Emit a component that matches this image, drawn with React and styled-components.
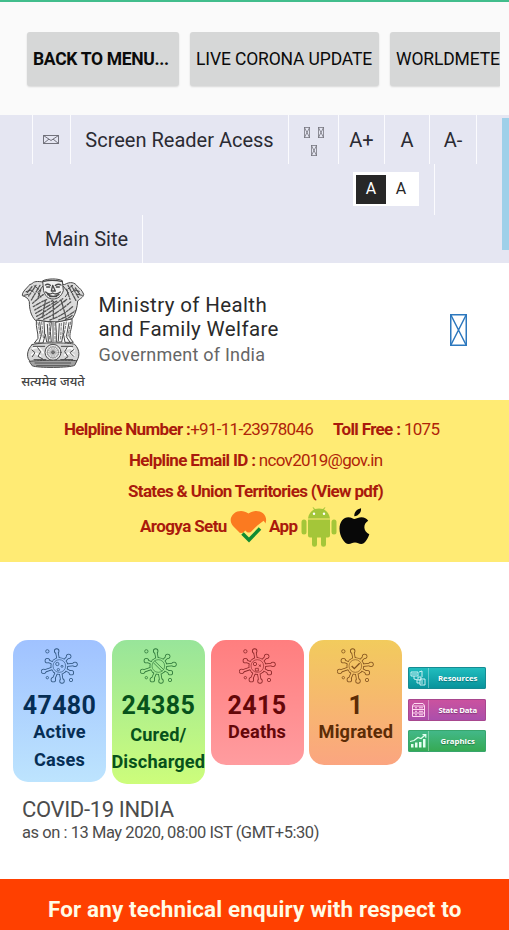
import React, { useId } from "react";
import styled, { createGlobalStyle } from "styled-components";

const GlobalStyle = createGlobalStyle`
  * { box-sizing: border-box; }
  body { margin: 0; background: #fff; font-family: Roboto, sans-serif; overflow: hidden; }
  p, h1, h2 { margin: 0; font-weight: 400; }
  svg { display: block; flex: none; }
`;

const Page = styled.div`
  width: 509px;
  height: 930px;
  overflow: hidden;
  display: flex;
  flex-direction: column;
  background: #fff;
`;

const Toolbar = styled.div`
  height: 115px;
  flex: none;
  border-top: 2px solid #41bd8c;
  background: #fafafa;
  padding: 30px 9px 0 27px;
`;

const ButtonStrip = styled.div`
  display: flex;
  gap: 11px;
  height: 60px;
  overflow: hidden;
  margin-left: -4px;
  padding-left: 4px;
`;

const ToolButton = styled.button`
  flex: none;
  width: ${(p) => p.$w}px;
  height: 54px;
  padding: 0 0 0 6px;
  border: 0;
  border-radius: ${(p) => (p.$cut ? "3px 0 0 3px" : "3px")};
  background: #d6d7d7;
  box-shadow: 0 1px 2px rgba(0, 0, 0, 0.14);
  color: #0b0b0b;
  font: ${(p) => (p.$strong ? 700 : 400)} 17.5px/54px Roboto, sans-serif;
  letter-spacing: ${(p) => p.$track || 0}px;
  text-align: left;
  white-space: nowrap;
`;

const AccessBar = styled.nav`
  position: relative;
  height: 148px;
  flex: none;
  background: #e5e6f2;
  color: #2b2b33;
`;

const AccessRow = styled.div`
  display: flex;
  height: ${(p) => p.$h}px;
  padding-left: ${(p) => p.$indent || 0}px;
`;

const AccessItem = styled.div`
  width: ${(p) => p.$w}px;
  height: 100%;
  border-right: 1px solid #fbfbfe;
  display: flex;
  align-items: center;
  justify-content: center;
  font-size: 20px;
  white-space: nowrap;
`;

const ScrollThumb = styled.div`
  position: absolute;
  right: 0;
  top: 3px;
  width: 7px;
  height: 132px;
  background: #9fd0e9;
`;

const GlyphGroup = styled.div`
  display: flex;
  flex-wrap: wrap;
  justify-content: center;
  width: 22px;
  gap: 7px 8px;
  padding-top: 3px;
`;

const ContrastSwitch = styled.div`
  display: flex;
  width: 66px;
  height: 34px;
  padding: 3px;
  margin-bottom: 2px;
  background: #fff;
`;

const ContrastOption = styled.span`
  width: 30px;
  height: 29px;
  line-height: 28px;
  text-align: center;
  font-size: 16px;
  background: ${(p) => (p.$dark ? "#272727" : "#fff")};
  color: ${(p) => (p.$dark ? "#fff" : "#272727")};
`;

const Masthead = styled.header`
  height: 137px;
  flex: none;
  display: flex;
  align-items: flex-start;
  padding: 14px 42px 0 20px;
`;

const EmblemBlock = styled.div`
  width: 66px;
  display: flex;
  flex-direction: column;
  align-items: center;
`;

const Motto = styled.span`
  margin-top: 1px;
  font: 500 12.8px/18px "Noto Sans", "Noto Sans Devanagari", sans-serif;
  color: #444;
  white-space: nowrap;
`;

const Ministry = styled.div`
  margin: 17px auto 0 12.5px;
`;

const MinistryName = styled.h1`
  font-size: 20.5px;
  line-height: 23.5px;
  letter-spacing: 0.37px;
  color: #2a2a2a;
  white-space: nowrap;
`;

const MinistryOwner = styled.p`
  margin-top: 1px;
  font-size: 18px;
  line-height: 26px;
  letter-spacing: 0.23px;
  color: #666;
`;

const MenuGlyph = styled.div`
  margin-top: 37px;
`;

const Helpline = styled.section`
  height: 162px;
  flex: none;
  background: #ffeb74;
  color: #b02408;
  padding-top: 13px;
`;

const HelpRow = styled.p`
  height: 31.3px;
  display: flex;
  align-items: center;
  padding-left: ${(p) => p.$x}px;
  font-size: 17px;
  letter-spacing: ${(p) => p.$track || 0}px;
  white-space: pre;
  b { font-weight: 700; color: #aa1a0c; letter-spacing: -0.66px; }
`;

const HelpGap = styled.span`
  width: 20px;
`;

const AppRow = styled.div`
  display: flex;
  align-items: center;
  height: 40px;
  padding-left: 140px;
  font-size: 17px;
  font-weight: 700;
  color: #aa1a0c;
  letter-spacing: -0.6px;
`;

const AppLabel = styled.span`
  width: ${(p) => p.$w}px;
  margin-bottom: 2px;
  padding-left: ${(p) => p.$pad || 0}px;
  white-space: nowrap;
`;

const Stats = styled.section`
  display: flex;
  align-items: flex-start;
  height: 156px;
  flex: none;
  margin-top: 78px;
  padding-left: 13px;
  gap: 5.8px;
`;

const Card = styled.article`
  width: 93px;
  height: ${(p) => p.$h}px;
  border-radius: 15px;
  background: linear-gradient(${(p) => p.$from}, ${(p) => p.$to});
  color: ${(p) => p.$ink};
  display: flex;
  flex-direction: column;
  align-items: center;
  padding-top: 8px;
`;

const CardValue = styled.strong`
  margin-top: 7px;
  font-size: 25px;
  line-height: 30px;
  font-weight: 700;
  letter-spacing: 0.4px;
`;

const CardLabel = styled.span`
  margin-top: ${(p) => p.$top || -3}px;
  font-size: 18.2px;
  line-height: ${(p) => p.$line || 28}px;
  font-weight: 700;
  text-align: center;
  white-space: pre;
  letter-spacing: 0.15px;
`;

const Links = styled.div`
  display: flex;
  flex-direction: column;
  gap: 9.5px;
  padding-top: 27px;
`;

const LinkButton = styled.div`
  width: 78px;
  height: 22px;
  border-radius: 2px;
  display: flex;
  align-items: center;
  background: linear-gradient(${(p) => p.$from}, ${(p) => p.$to});
  box-shadow: inset 0 0 0 1px ${(p) => p.$edge};
  color: #fff;
`;

const LinkIcon = styled.div`
  width: 21px;
  height: 20px;
  display: flex;
  align-items: center;
  justify-content: center;
  border-right: 1px solid rgba(255, 255, 255, 0.35);
`;

const LinkText = styled.span`
  flex: 1;
  text-align: center;
  font: 700 7.8px/20px "Open Sans", sans-serif;
  letter-spacing: ${(p) => p.$track || 0}px;
  text-shadow: 0 1px 1px rgba(0, 0, 0, 0.3);
  white-space: nowrap;
`;

const Region = styled.section`
  height: 83px;
  flex: none;
  padding: 1px 0 0 22px;
  color: #4c4c4c;
`;

const RegionName = styled.h2`
  font-size: 22px;
  line-height: 26px;
  letter-spacing: -0.35px;
`;

const RegionDate = styled.p`
  font-size: 16.5px;
  line-height: 19px;
  letter-spacing: -0.45px;
`;

const Notice = styled.footer`
  flex: 1;
  background: #ff4000;
  color: #fffbe6;
  font-size: 22.4px;
  line-height: 60px;
  font-weight: 700;
  letter-spacing: 0.15px;
  padding-left: 48px;
  white-space: nowrap;
`;

const MissingGlyph = ({ w, h, color, weight = 1 }) => (
  <svg width={w} height={h} viewBox={`0 0 ${w} ${h}`} fill="none" stroke={color} strokeWidth={weight}>
    <rect x={weight / 2} y={weight / 2} width={w - weight} height={h - weight} />
    <path d={`M${weight / 2} ${weight / 2}L${w - weight / 2} ${h - weight / 2}M${w - weight / 2} ${weight / 2}L${weight / 2} ${h - weight / 2}`} />
  </svg>
);

const Envelope = () => (
  <svg width="16" height="9" viewBox="0 0 16 9" fill="none" stroke="#55555e" strokeWidth=".8">
    <path d="M.5.5h15v8H.5zM.5.5 8 5.5l7.5-5M.5 8.5 6 4M15.5 8.5 10 4" />
  </svg>
);

const Emblem = () => (
  <svg width="66" height="94" viewBox="30 21 198 282" fill="none" stroke="#484848" strokeWidth="3" strokeLinecap="round" strokeLinejoin="round">
    <path fill="#dcdcdc" d="M98 36C83 33 70 34 65 42C57 42 55 50 50 54C42 62 36 70 37 77C48 80 55 86 58 95C58 116 62 136 76 151L101 154L151 156L187 146C197 131 202 111 203 93C208 87 221 82 221 73C217 62 209 54 202 49C195 37 180 34 165 43Z" />
    <g strokeWidth="4" stroke="#555" strokeDasharray="5 4 8 3 3 5">
      <path d="M66 50L50 70M78 46L56 78M90 46L64 90M196 54L210 74M184 47L205 82M174 46L198 92" />
      <path d="M68 100Q85 84 100 74M70 110Q92 96 112 88M74 120Q100 104 128 92M77 130Q104 114 142 92M80 139Q112 122 158 86M84 147Q120 130 170 88M101 148Q140 132 182 96M120 150Q160 136 190 108M146 150Q176 138 196 122M166 148Q180 142 190 134" />
      <path d="M92 60L84 84M170 58L180 88M106 92l-8 50M154 92l14 50M130 94v50" />
    </g>
    <path fill="#f2f2f2" d="M99 32C114 25 143 25 157 32L160 62C154 80 142 87 129 87C114 87 105 77 101 63Z" />
    <path strokeWidth="4" d="M101 34Q128 28 157 35M106 45Q113 40 121 46M136 46Q146 40 153 45M110 51h9M139 51h9M128 46l-4 17h12zM107 66q10 10 21 3q12 7 23-3M113 74Q129 84 147 74M119 80h21" />
    <path d="M48 65l16-5 7 7M42 76l13-3M208 64l-15-4-9 8M217 76l-15-3M72 47l13 10M188 46l-13 10M98 49L84 68l8 13M160 49l15 19-9 12" />
    <path fill="#f6f6f6" d="M79 151C77 174 85 187 84 205L73 219H99L106 193L110 216H124L121 185L124 158ZM137 158L139 188 139 216H155L160 190L165 217H190L180 204C178 183 188 174 186 148Z" />
    <path d="M89 156l5 40-7 21M102 157l2 36M112 163l3 50M129 158v59M148 161l-3 51M162 157l-3 34M177 158l-8 42 11 17" />
    <path stroke="#777" strokeDasharray="8 5" d="M84 158l7 39M95 156l5 47M118 160v48M135 160v55M154 160l-2 48M169 156l-7 38M182 156l-8 43" />
    <path fill="#d6d6d6" d="M66 224C80 217 180 217 194 223C211 240 210 263 196 278L64 277C47 266 50 240 66 224Z" />
    <circle cx="129" cy="247" r="24" fill="#eee" />
    <circle cx="129" cy="247" r="17" strokeWidth="2" stroke="#777" />
    <circle cx="129" cy="247" r="4" fill="#777" />
    <path strokeWidth="1.5" stroke="#777" d="M129 229v36M111 247h36M116 234l26 26M142 234l-26 26M122 230l14 34M136 230l-14 34M112 240l34 14M112 254l34-14" />
    <path stroke="#fafafa" strokeWidth="6" d="M68 236q14-8 24 3l7 9M66 254l10-5 15 9M166 238l16-5 10 9M165 255l14-7 13 9" />
    <path d="M66 240l9 8-8 12M83 233l9 12-8 14 14 8M191 239l-11 9 11 11M171 233l-7 12 10 15-10 7M70 229h34M154 229h34M72 269h36M152 269h36" />
    <path fill="#a2a2a2" d="M59 274C84 270 178 270 201 272L194 286C178 294 83 294 68 288Z" />
    <path stroke="#444" strokeWidth="2.5" d="M75 279h107M80 287h98" />
  </svg>
);

const SetuHeart = () => (
  <svg width="37" height="34" viewBox="0 0 37 34">
    <path fill="#fb7a20" d="M18.5 3.5C23 .2 29 0 33 3.3C37 7 37 12 34 16L28 22L10 23L3 16C-.3 12-.2 7 4 3.4C8 .2 14 .1 18.5 3.5Z" />
    <path fill="none" stroke="#ffeb74" strokeWidth="8" d="M12.5 23.5l6.5 6L30 18.5L36 14" />
    <path fill="none" stroke="#108c32" strokeWidth="3.5" d="M12.5 23.5l6.5 6.5L30 18.5" />
  </svg>
);

const Android = () => (
  <svg width="36" height="40" viewBox="0 0 36 40" fill="#a4c639">
    <path d="M7 11.5C7.5 7 10 4 13 2.5L11.5.6L12.3.2L14 2Q18 .8 22 2L23.7.2L24.5.6L23 2.5C26 4 28.5 7 29 11.5Z" />
    <path d="M7 12.5h22v16q0 2-2 2h-2v7q0 2.3-2.5 2.3T20 37.5v-7h-4v7q0 2.3-2.5 2.3T11 37.5v-7H9q-2 0-2-2z" />
    <rect x=".5" y="12.5" width="5" height="15" rx="2.5" />
    <rect x="30.5" y="12.5" width="5" height="15" rx="2.5" />
    <circle cx="13" cy="6.8" r="1.2" fill="#fff" />
    <circle cx="23" cy="6.8" r="1.2" fill="#fff" />
  </svg>
);

const Apple = () => (
  <svg width="31" height="37" viewBox="0 0 31 37" fill="#080808">
    <path d="M15.3 8.3C14.8 4.3 18 1 22 .2C22.5 4.2 19.5 7.8 15.3 8.3Z" />
    <path d="M15.6 11C17.8 10.6 19.6 9.2 22.5 9.2C25.4 9.3 27.8 10.6 29.2 12.8C23.5 16 24.4 23.7 30.3 26.2C28.5 31.3 25.7 36 22.2 36C19.8 36 18.8 34.6 16 34.6C13 34.6 12 36 9.7 36C5.2 36 .5 27.8.5 20.7C.5 13.7 4.7 9.3 9.3 9.3C12.1 9.3 13.8 10.9 15.6 11Z" />
  </svg>
);

const SPOKES = [[170, 64], [206, 80], [225, 104], [214, 129], [186, 154], [160, 150], [131, 125], [142, 93]];

const SpikeShape = ({ color, grow }) => (
  <g stroke={color} fill={color} strokeWidth={5 + grow}>
    {SPOKES.map(([x, y]) => <path key={x} d={`M178 109L${x} ${y}`} />)}
    <g stroke="none">
      {SPOKES.map(([x, y]) => <circle key={x} cx={x} cy={y} r={5.6 + grow / 2} />)}
      <circle cx="178" cy="109" r={24 + grow / 2} />
    </g>
  </g>
);

const Virus = ({ kind, color }) => {
  const id = useId();
  return (
    <svg width="37" height="36" viewBox="123 55 111 108" fill="none" stroke={color} strokeWidth="2.4" opacity=".75">
      <mask id={id} maskUnits="userSpaceOnUse" x="115" y="45" width="130" height="130">
        <SpikeShape color="#fff" grow={5} />
        <SpikeShape color="#000" grow={0} />
      </mask>
      <rect x="115" y="45" width="130" height="130" fill={color} stroke="none" mask={`url(#${id})`} />
      <circle cx="178" cy="109" r="19" strokeWidth="2" />
      <circle cx="142" cy="65" r="5" />
      <circle cx="213" cy="151" r="5" />
      <circle cx="142" cy="144" r="3.6" />
      {kind === "cells" && <><circle cx="172" cy="103" r="5" /><circle cx="186" cy="110" r="3" /><circle cx="175" cy="120" r="3.5" /></>}
      {kind === "blocked" && <path d="M167 94l27 26M163 99l26 26" />}
      {kind === "faces" && <><circle cx="171" cy="103" r="5" /><path d="M182 105l7 6M189 105l-7 6M172 116h9v8h-9z" /></>}
      {kind === "check" && <path strokeWidth="4" d="M167 109l8 8 16-16" />}
    </svg>
  );
};

const ResourcesIcon = () => (
  <svg width="16" height="16" viewBox="0 0 16 16" fill="none" stroke="#dff8fa" strokeWidth=".9">
    <path d="M1 2h7v4H1zM2 4h5M9 2l3-1v6M4 6v3l4 1M8 7h3v3H8zM10 9h5v6h-5zM12 10v4M7 10v3h3" />
  </svg>
);
const DataIcon = () => (
  <svg width="15" height="16" viewBox="0 0 15 16" fill="none" stroke="#ffd9f0" strokeWidth="1">
    <path d="M3 1.5h9l1.5 2v11h-12v-11zM1.5 4h12M1.5 7.5h12M1.5 11h12M4 5.8h2M8 5.8h4M4 9.3h2M8 9.3h4M4 12.8h2M8 12.8h4" />
  </svg>
);
const GraphIcon = () => (
  <svg width="17" height="14" viewBox="0 0 17 14" fill="#e3fff0">
    <path d="M1 10h2.5v3.5H1zM5 8.5h2.5v5H5zM9 8h2.5v5.5H9zM13 5h2.5v8.5H13z" />
    <path fill="none" stroke="#e3fff0" strokeWidth="1.2" d="M0 7.5l4-1 4-3 3 1 4.5-3.8M12.5 .7h3.3v3" />
  </svg>
);

const CARDS = [
  { value: "47480", label: "Active\nCases", kind: "cells", h: 142, from: "#a0c2ff", to: "#bde4fe", ink: "#062e55" },
  { value: "24385", label: "Cured/\nDischarged", kind: "blocked", h: 144, from: "#98e59a", to: "#cdfd7b", ink: "#07521b", top: 1, line: 26.5 },
  { value: "2415", label: "Deaths", kind: "faces", h: 125, from: "#ff7e7f", to: "#ff9c9f", ink: "#650709" },
  { value: "1", label: "Migrated", kind: "check", h: 125, from: "#f2cb5d", to: "#fba580", ink: "#5c2c06" },
];

const LINKS = [
  { text: "Resources", icon: <ResourcesIcon />, from: "#22bfc0", to: "#07919a", edge: "#168b92" },
  { text: "State Data", icon: <DataIcon />, from: "#cc529e", to: "#a94fac", edge: "#a8478f", track: -0.25 },
  { text: "Graphics", icon: <GraphIcon />, from: "#43b98b", to: "#35a951", edge: "#37a66d" },
];

export default function App() {
  return (
    <Page>
      <GlobalStyle />
      <Toolbar>
        <ButtonStrip>
          <ToolButton $w={152} $strong $track={-0.32}>BACK TO MENU...</ToolButton>
          <ToolButton $w={189} $track={-0.14}>LIVE CORONA UPDATE</ToolButton>
          <ToolButton $w={110} $cut $track={-0.14}>WORLDMETE</ToolButton>
        </ButtonStrip>
      </Toolbar>

      <AccessBar>
        <AccessRow $h={49}>
          <AccessItem $w={32.5} />
          <AccessItem $w={38.5}><Envelope /></AccessItem>
          <AccessItem $w={218}>Screen Reader Acess</AccessItem>
          <AccessItem $w={50}>
            <GlyphGroup>
              <MissingGlyph w={6} h={11} color="#777780" weight={0.8} />
              <MissingGlyph w={6} h={11} color="#777780" weight={0.8} />
              <MissingGlyph w={6} h={11} color="#777780" weight={0.8} />
            </GlyphGroup>
          </AccessItem>
          <AccessItem $w={46}>A+</AccessItem>
          <AccessItem $w={45}>A</AccessItem>
          <AccessItem $w={47}>A-</AccessItem>
        </AccessRow>
        <AccessRow $h={51} $indent={338}>
          <AccessItem $w={97}>
            <ContrastSwitch>
              <ContrastOption $dark>A</ContrastOption>
              <ContrastOption>A</ContrastOption>
            </ContrastSwitch>
          </AccessItem>
        </AccessRow>
        <AccessRow $h={48} $indent={31}>
          <AccessItem $w={112}>Main Site</AccessItem>
        </AccessRow>
        <ScrollThumb />
      </AccessBar>

      <Masthead>
        <EmblemBlock>
          <Emblem />
          <Motto>सत्यमेव जयते</Motto>
        </EmblemBlock>
        <Ministry>
          <MinistryName>Ministry of Health</MinistryName>
          <MinistryName>and Family Welfare</MinistryName>
          <MinistryOwner>Government of India</MinistryOwner>
        </Ministry>
        <MenuGlyph><MissingGlyph w={17} h={32} color="#2d78be" weight={1.5} /></MenuGlyph>
      </Masthead>

      <Helpline>
        <HelpRow $x={64} $track={-0.72}><b>Helpline Number :</b>+91-11-23978046<HelpGap /><b>Toll Free : </b>1075</HelpRow>
        <HelpRow $x={129} $track={-0.7}><b>Helpline Email ID : </b>ncov2019@gov.in</HelpRow>
        <HelpRow $x={128}><b>States &amp; Union Territories (View pdf)</b></HelpRow>
        <AppRow>
          <AppLabel $w={90}>Arogya Setu</AppLabel>
          <SetuHeart />
          <AppLabel $w={34} $pad={2}>App</AppLabel>
          <Android />
          <AppLabel $w={2} />
          <Apple />
        </AppRow>
      </Helpline>

      <Stats>
        {CARDS.map((c) => (
          <Card key={c.value} $h={c.h} $from={c.from} $to={c.to} $ink={c.ink}>
            <Virus kind={c.kind} color={c.ink} />
            <CardValue>{c.value}</CardValue>
            <CardLabel $top={c.top} $line={c.line}>{c.label}</CardLabel>
          </Card>
        ))}
        <Links>
          {LINKS.map((l) => (
            <LinkButton key={l.text} $from={l.from} $to={l.to} $edge={l.edge}>
              <LinkIcon>{l.icon}</LinkIcon>
              <LinkText $track={l.track}>{l.text}</LinkText>
            </LinkButton>
          ))}
        </Links>
      </Stats>

      <Region>
        <RegionName>COVID-19 INDIA</RegionName>
        <RegionDate>as on : 13 May 2020, 08:00 IST (GMT+5:30)</RegionDate>
      </Region>
      <Notice>For any technical enquiry with respect to</Notice>
    </Page>
  );
}
